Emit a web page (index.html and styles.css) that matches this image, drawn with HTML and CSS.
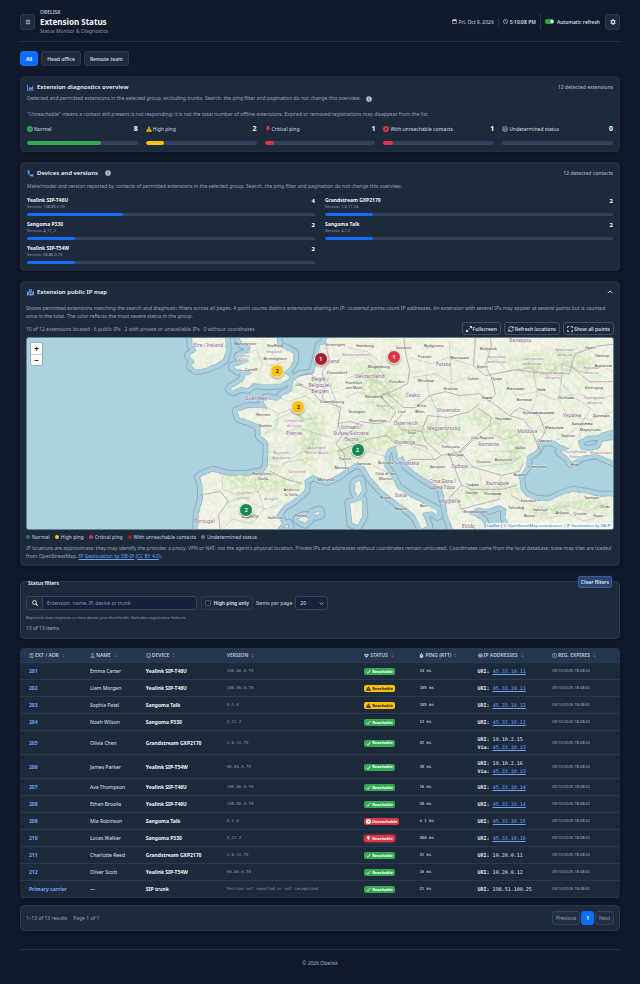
FILE: index.html
```html
<!DOCTYPE html>
<html lang="en">
<head>
<meta charset="utf-8">
<meta name="viewport" content="width=device-width, initial-scale=1">
<title>Extension Status</title>
<link rel="stylesheet" href="styles.css">
</head>
<body>
<svg class="sprite" aria-hidden="true">
  <symbol id="menu" viewBox="0 0 16 16"><path d="M2 3.500h12M2 8h12M2 12.500h12" stroke="currentColor" stroke-width="2"/></symbol>
  <symbol id="calendar" viewBox="0 0 16 16"><path d="M2 3h12v11.500H2z" fill="none" stroke="currentColor" stroke-width="1.800"/><path d="M1.500 2.500h13V6h-13zM4 0h2v3H4zM10 0h2v3h-2z" fill="currentColor"/></symbol>
  <symbol id="clock" viewBox="0 0 16 16"><circle cx="8" cy="8" r="6.800" fill="none" stroke="currentColor" stroke-width="1.800"/><path d="M8 4v4.300l3 1.700" fill="none" stroke="currentColor" stroke-width="1.800"/></symbol>
  <symbol id="gear" viewBox="0 0 16 16"><circle cx="8" cy="8" r="4.200" fill="none" stroke="currentColor" stroke-width="3.400"/><path d="M8 .3v3M8 12.700v3M1.300 4.200l2.600 1.500M12.100 10.300l2.600 1.500M1.300 11.800l2.600-1.500M12.100 5.700l2.600-1.500" stroke="currentColor" stroke-width="3"/></symbol>
  <symbol id="chart" viewBox="0 0 16 16"><path d="M1 1.500V14h14.500" fill="none" stroke="currentColor" stroke-width="2"/><path d="M4 10l3-4 3 3 4-6v9H4z" fill="currentColor"/></symbol>
  <symbol id="info" viewBox="0 0 16 16"><circle cx="8" cy="8" r="7.500" fill="currentColor"/><path d="M8 3.200v2M8 7v5" fill="none" stroke="#1c2a3c" stroke-width="2"/></symbol>
  <symbol id="check-circle" viewBox="0 0 16 16"><circle cx="8" cy="8" r="8" fill="currentColor"/><path d="M4.500 8.200l2.500 2.500 4.500-5" fill="none" stroke="#1c2a3c" stroke-width="1.800"/></symbol>
  <symbol id="warn" viewBox="0 0 16 16"><path d="M8 .8L16 15H0z" fill="currentColor"/><path d="M8 5.500v4.500M8 11.500v2" stroke="#1c2a3c" stroke-width="1.800"/></symbol>
  <symbol id="warn-badge" viewBox="0 0 16 16"><path d="M8 .8L16 15H0z" fill="currentColor"/><path d="M8 5.500v4.500M8 11.500v2" stroke="#ffc107" stroke-width="1.800"/></symbol>
  <symbol id="bolt" viewBox="0 0 16 16"><path d="M5 0h7l-2 5.500h4L5.500 16l2-7H2.500z" fill="currentColor"/></symbol>
  <symbol id="x-circle" viewBox="0 0 16 16"><circle cx="8" cy="8" r="8" fill="currentColor"/><path d="M5.300 5.300l5.400 5.400M10.700 5.300l-5.400 5.400" stroke="#1c2a3c" stroke-width="2"/></symbol>
  <symbol id="x-badge" viewBox="0 0 16 16"><circle cx="8" cy="8" r="8" fill="currentColor"/><path d="M5.300 5.300l5.400 5.400M10.700 5.300l-5.400 5.400" stroke="#dc3545" stroke-width="2"/></symbol>
  <symbol id="q-circle" viewBox="0 0 16 16"><circle cx="8" cy="8" r="8" fill="currentColor"/><path d="M5.500 6.200c0-3.400 5-3.200 5-.4C10.500 7.800 8 7.600 8 9.600M8 11.200v1.800" fill="none" stroke="#1c2a3c" stroke-width="1.600"/></symbol>
  <symbol id="phone" viewBox="0 0 16 16"><path d="M1 1.700L4.700.8l2 4.300-2.200 1.800c1 2.200 2.400 3.600 4.600 4.600l1.800-2.200 4.300 2-.9 3.700C7 15.500.5 9 1 1.700z" fill="currentColor"/></symbol>
  <symbol id="map" viewBox="0 0 16 16"><path d="M0 6.500L4 5v9l-4 1.500zM5.200 8v6l5.600 1.500V8L8 11.500zM12 6l4-1.500v9.300L12 15.500z" fill="currentColor"/><path fill-rule="evenodd" d="M8 0a3.800 3.800 0 013.800 3.800C11.800 6 8 10 8 10S4.200 6 4.200 3.800A3.800 3.800 0 018 0zm0 2.300a1.500 1.500 0 100 3 1.500 1.500 0 000-3z" fill="currentColor"/></symbol>
  <symbol id="up" viewBox="0 0 16 16"><path d="M2 11l6-6 6 6" fill="none" stroke="currentColor" stroke-width="2.600"/></symbol>
  <symbol id="down" viewBox="0 0 16 16"><path d="M2 5l6 6 6-6" fill="none" stroke="currentColor" stroke-width="2.200"/></symbol>
  <symbol id="expand" viewBox="0 0 16 16"><path d="M9 0h7v7zM0 9v7h7z" fill="currentColor"/><path d="M13 3L9.500 6.500M3 13l3.500-3.500" stroke="currentColor" stroke-width="2.400"/></symbol>
  <symbol id="refresh" viewBox="0 0 16 16"><path d="M2 7a6.200 6.200 0 0111-3M14 9a6.200 6.200 0 01-11 3" fill="none" stroke="currentColor" stroke-width="2"/><path d="M15 0v6H9zM1 16v-6h6z" fill="currentColor"/></symbol>
  <symbol id="corners" viewBox="0 0 16 16"><path d="M1.500 5.500v-4h4M10.500 1.500h4v4M14.500 10.500v4h-4M5.500 14.500h-4v-4" fill="none" stroke="currentColor" stroke-width="2.200"/></symbol>
  <symbol id="search" viewBox="0 0 16 16"><circle cx="6.500" cy="6.500" r="5" fill="none" stroke="currentColor" stroke-width="2.400"/><path d="M10 10l5 5" stroke="currentColor" stroke-width="3"/></symbol>
  <symbol id="sort" viewBox="0 0 16 16"><path d="M4 6.500L8 2l4 4.500zM4 9.500L8 14l4-4.500z" fill="currentColor"/></symbol>
  <symbol id="book" viewBox="0 0 16 16"><path d="M3 1h10v14H3z" fill="none" stroke="currentColor" stroke-width="1.800"/><path d="M5.500 11.500c0-3 5-3 5 0zM6.500 4h3v3h-3z" fill="currentColor"/></symbol>
  <symbol id="user" viewBox="0 0 16 16"><circle cx="8" cy="4.500" r="3.200" fill="none" stroke="currentColor" stroke-width="1.800"/><path d="M2 15c0-5.500 12-5.500 12 0z" fill="none" stroke="currentColor" stroke-width="1.800"/></symbol>
  <symbol id="tablet" viewBox="0 0 16 16"><rect x="3" y="1" width="10" height="14" rx="1.500" fill="none" stroke="currentColor" stroke-width="2"/><path d="M6 12.500h4" stroke="currentColor" stroke-width="1.800"/></symbol>
  <symbol id="heart" viewBox="0 0 16 16"><path d="M8 15L1.500 8.500C-1.500 4 4-.5 8 4c4-4.500 9.500 0 6.500 4.500z" fill="currentColor"/><path d="M1 8h5l1.500-2.500L9.500 10l1-2H15" fill="none" stroke="#26364e" stroke-width="1.200"/></symbol>
  <symbol id="timer" viewBox="0 0 16 16"><circle cx="8" cy="9.500" r="6.300" fill="currentColor"/><path d="M5.500 1h5M8 1v3" stroke="currentColor" stroke-width="2"/><path d="M8 6v4" stroke="#26364e" stroke-width="1.500"/></symbol>
  <symbol id="globe" viewBox="0 0 16 16"><circle cx="8" cy="8" r="7.500" fill="currentColor"/><path d="M0 5.700h16M0 10.300h16M8 0v16M8 .5c-5 4-5 11 0 15M8 .5c5 4 5 11 0 15" fill="none" stroke="#26364e" stroke-width=".9"/></symbol>
  <symbol id="check" viewBox="0 0 16 16"><path d="M1.500 8.500l4.500 4.500L14.500 3" fill="none" stroke="currentColor" stroke-width="2.600"/></symbol>
</svg>

<div class="page">
  <header class="top">
    <button class="square" aria-label="Menu"><svg class="ico"><use href="#menu"/></svg></button>
    <div class="brand">
      <p class="over">OBELISK</p>
      <h1>Extension Status</h1>
      <p class="sub">Status Monitor &amp; Diagnostics</p>
    </div>
    <div class="clockbar">
      <span class="stamp"><svg class="ico sm"><use href="#calendar"/></svg>Fri, Oct 9, 2026</span>
      <b class="stamp time"><svg class="ico sm"><use href="#clock"/></svg>5:10:08 PM</b>
      <label class="auto"><input type="checkbox" class="switch" checked>Automatic refresh</label>
      <button class="square" aria-label="Settings"><svg class="ico"><use href="#gear"/></svg></button>
    </div>
  </header>

  <nav class="tabs">
    <button class="tab on">All</button><button class="tab">Head office</button><button class="tab">Remote team</button>
  </nav>

  <main>
  <section class="card overview">
    <div class="head"><h2><svg class="ico"><use href="#chart"/></svg>Extension diagnostics overview</h2><span class="tally">12 detected extensions</span></div>
    <p class="note">Detected and permitted extensions in the selected group, excluding trunks. Search, the ping filter and pagination do not change this overview. <svg class="ico hint"><use href="#info"/></svg></p>
    <p class="note second">"Unreachable" means a contact still present is not responding; it is not the total number of offline extensions. Expired or removed registrations may disappear from the list.</p>
    <div class="stats">
      <div class="stat ok"><p><svg class="ico"><use href="#check-circle"/></svg>Normal<b>8</b></p><div class="bar"><i style="width:66.7%"></i></div></div>
      <div class="stat high"><p><svg class="ico"><use href="#warn"/></svg>High ping<b>2</b></p><div class="bar"><i style="width:16.7%"></i></div></div>
      <div class="stat crit"><p><svg class="ico"><use href="#bolt"/></svg>Critical ping<b>1</b></p><div class="bar"><i style="width:8.3%"></i></div></div>
      <div class="stat crit"><p><svg class="ico"><use href="#x-circle"/></svg>With unreachable contacts<b>1</b></p><div class="bar"><i style="width:8.3%"></i></div></div>
      <div class="stat none"><p><svg class="ico"><use href="#q-circle"/></svg>Undetermined status<b>0</b></p><div class="bar"><i style="width:0"></i></div></div>
    </div>
  </section>

  <section class="card devices">
    <div class="head"><h2><svg class="ico"><use href="#phone"/></svg>Devices and versions <svg class="ico hint"><use href="#info"/></svg></h2><span class="tally">12 detected contacts</span></div>
    <p class="note">Make/model and version reported by contacts of permitted extensions in the selected group. Search, the ping filter and pagination do not change this overview.</p>
    <div class="models">
      <div class="model"><h3>Yealink SIP-T46U</h3><b>4</b><p>Version: 108.86.0.70</p><div class="bar"><i style="width:33.3%"></i></div></div>
      <div class="model"><h3>Grandstream GXP2170</h3><b>2</b><p>Version: 1.0.11.74</p><div class="bar"><i style="width:16.7%"></i></div></div>
      <div class="model"><h3>Sangoma P330</h3><b>2</b><p>Version: 4_11_2</p><div class="bar"><i style="width:16.7%"></i></div></div>
      <div class="model"><h3>Sangoma Talk</h3><b>2</b><p>Version: 4.1.0</p><div class="bar"><i style="width:16.7%"></i></div></div>
      <div class="model"><h3>Yealink SIP-T54W</h3><b>2</b><p>Version: 96.86.0.70</p><div class="bar"><i style="width:16.7%"></i></div></div>
    </div>
  </section>

  <section class="card mapcard">
    <div class="head"><h2><svg class="ico"><use href="#map"/></svg>Extension public IP map</h2><button class="fold" aria-label="Collapse"><svg class="ico"><use href="#up"/></svg></button></div>
    <p class="note wide">Shows permitted extensions matching the search and diagnostic filters across all pages. A point counts distinct extensions sharing an IP; clustered points count IP addresses. An extension with several IPs may appear at several points but is counted once in the total. The color reflects the most severe status in the group.</p>
    <div class="maptools">
      <span>10 of 12 extensions located · 6 public IPs · 2 with private or unavailable IPs · 0 without coordinates</span>
      <button><svg class="ico"><use href="#expand"/></svg>Fullscreen</button>
      <button><svg class="ico"><use href="#refresh"/></svg>Refresh locations</button>
      <button><svg class="ico"><use href="#corners"/></svg>Show all points</button>
    </div>
    <div class="map">
      <svg class="world" viewBox="0 0 588 192" preserveAspectRatio="xMidYMid slice" role="img" aria-label="Map of Europe">
        <defs>
          <filter id="woods" x="0" y="0" width="100%" height="100%">
            <feTurbulence type="fractalNoise" baseFrequency=".07" numOctaves="5" seed="8"/>
            <feColorMatrix values="0 0 0 0 .74  0 0 0 0 .86  0 0 0 0 .65  0 4 0 0 -1.9"/>
          </filter>
          <filter id="fields" x="0" y="0" width="100%" height="100%">
            <feTurbulence type="fractalNoise" baseFrequency=".25" numOctaves="3" seed="21"/>
            <feColorMatrix values="0 0 0 0 .96  0 0 0 0 .94  0 0 0 0 .89  0 5 0 0 -2.2"/>
          </filter>
          <filter id="soft"><feGaussianBlur stdDeviation="4"/></filter>
          <path id="land" fill-rule="evenodd" d="M165-9V0l1 8 4 5-7 5 5 6-3 4 5 4 10-2 10-4 7-4 3-10-1-12V-9zM213-9V0l3 6 8 2-1 6-10 5 8 2 1 3-15 5 4 3 11 1 4 2-7 3-2 5-13 8 3 2 9-4 5 2 6-5 14 1 13-1 10-5-1-3-6-3 6-5 4-6 1-8-7-4-9-3-1-9v-9zM304-9l-5 15-5 2-2 10-2 8-3 10-13 2-7 5-1 10-10 5-2 3-3 2-10-2-4 2 4 8-10-1h-9l-11 4 2 6 9 3 9 4 3 4v7l7 6 1 5-1 20-4 6-16 3h-20l-14-4-6 2-8 4 3 9v14l-4 13-1 16v9h82l-1-9 4-6-5-8 6-9 10-6 12-10v-10l8-5 7 3 7 2 11-5 7-5 10-7 8 2 7 11 12 14 10 8 10 7 11 8 5 7 4 9 6-3-2-6-3-7 9-2 6 4-1-5-17-9-10-5-12-8-6-12-7-10v-10l3-8 8-2 2 12 5-2 4 9 13 10 13 8 9 5 3 12 3 16 5 13v9h34v-9l-4-9-13-7 8-5 12 1 10-4 7 4-1 8 6 12v9h113V-9zM496 153l-2-14 7-10 1-10 9-6 5-9 11-1 9 5 8 3-9 3 9 7 2 4 11-6 14-3 6 3 22 9v31h-25l-13-3-14-2-13 5-10 5-13-1-10-4zM556 112l-3-8 8-5 10-1 13-5h15v7l-22 4-3 7-10 2zM329 146l5-3 2 10-4 6-3-5zM324 166l12-3 1 16-5 9-6-2zM272 182l7-3 4 3-4 4zM287 176l6-2 1 3-4 1zM257 190l5-3 1 4z"/>
          <clipPath id="coast"><use href="#land" clip-rule="evenodd"/></clipPath>
        </defs>
        <rect width="588" height="192" class="sea"/>
        <use href="#land" class="limit"/><use href="#land" class="shelf"/>
        <use href="#land" class="soil"/>
        <g clip-path="url(#coast)">
          <g class="forest" filter="url(#soft)">
            <path d="M330 25l30 10 20 20-15 25-20-10-10-20zM320 100l30-10 60-5 30 10-25 10-60 5-35 15-20-10zM440 70l25 5 35 25-5 30-35-5 25-10-10-15-35-20zM480 22l60-12 30 12-10 12-60 6zM241 112l10-4 5 20-14 8zM375 115l50 30 10 20-20-15zM200 135l60 4 25 10-40 6-45-5zM440 150l50-4 8 10-60 6zM500 170l60-10 40 10-90 10zM270 70l30 10-10 40-15 10z"/>
          </g>
          <rect width="588" height="192" filter="url(#woods)"/>
          <rect width="588" height="192" filter="url(#fields)" opacity=".6"/>
        </g>
        <path class="river" d="M538 20l-2 25 12 14 18 12-8 12-14 14-14 6M405 58l8 20-4 18 14 12 22 22 40-4 12-8M300 40l8 18 6 20-4 20M247 84l20-10 10 6M342 20l14 14 6 12"/>
        <g class="border">
          <path d="M267 40l8 8 10 4 8 10 12 4 10 4-3 16 4 12-6 8 8 10 2 14 5 6M274 38l10-2 8 6 6-2M300 8l4 16-8 10 4 14-4 12 6 6M378 0l2 16 4 16-2 14-20 10 16 14 12 0 14-12 16-4 14 4 20-2 10 8 6-8-4-16-6-12 6-20-2-14M362 56l-8 2 16 16-6 10-14 2-16-2-6 8M380 72l-10 12 6 8 20 2 6-16 20 2 22-6 10-8M396 94l4 10 16 14 20-4 16-16 12-10 2-8-14-10M370 109l8-4 22 4 2 4M416 118l-6 4-24 0-8 4M448 100l-14 14 14 16 28 8 18-4 4-8M424 118l8 20 4 10-12 12M436 148l10 4 30 0 16-4M422 162l10 0 4 10 14-4 24-6M460 60l24 18 14 4 8 10 10 24M484 78l10-8 20 8 6 16-8 14M450 0l-2 28 12 10 30-6 30 4 24 0 6-20 24-8 20-2M546 28l18 16 24 0M174 158l20-4 8 10-10 14 2 14M244 134l16 8 16 4M312 86l12-2 14 4M311 114l16-6 14-6 20-4 8 8M330 88l-10 12 10 8M496 164l-10-6"/>
        </g>
        <g class="region">
          <path d="M220 16l10-4 6 14-4 12M240 28l20-4M238 68l14 8 12-4 14 10 14-2M252 76l-2 14-12 6M258 96l14-6 18 6-4 14-16 8-14 10M290 96l16 4M256 126l20-4 10 8M196 138l0 14 16 6 20-4 8-12M232 154l6 18 14-4M200 166l16-6 22 12-12 14-20-4-8 8M250 58l12 6 18-6 10 8M322 10l20 4 14 12-6 16 14 12M322 40l14-4 14 8M320 60l12-6 16 6 16-6M384 20l22 6 16-6 26 8M386 40l24-4 16 10 20-8M404 60l-4-24M426 46l-2-42M470 20l12 14 22-4 18 8 14-12 20 8 20-6 12 6M480 42l10 16 22-4 16 8 24-6 18 6 18-4M508 32l4 24-6 20M536 38l-2 24 8 16 24 4 22-8M464 96l16 6 18-8M462 114l26 0 10-6M362 120l-18-6-14 4M346 128l14 6 12 12M380 106l24 10 10 12M508 168l20 4 14-4 20 6 20-8M520 182l22-6 16 8 24-6M454 136l2 12M474 136l2 14M530 80l-18 10 10 8M558 84l-4 16M420 78l2 20-10 10"/>
        </g>
        <g class="lands">
          <text x="182" y="9">Éire / Ireland</text><text x="248" y="15" class="s">England</text><text x="217" y="19" class="s">Cymru</text><text x="217" y="24" class="s">Wales</text><text x="230" y="62">Guernsey</text><text x="268" y="84" class="s">Centre-Val</text><text x="268" y="89" class="s">de Loire</text><text x="268" y="98">France</text><text x="255" y="117" class="s">Nouvelle</text><text x="255" y="122" class="s">Aquitaine</text><text x="271" y="136" class="s">Occitanie</text><text x="291" y="112" class="s">Auvergne</text><text x="291" y="117" class="s">Rhône-Alpes</text><text x="217" y="157" class="s">Castilla</text><text x="217" y="162" class="s">y León</text><text x="245" y="163" class="s">Aragón</text><text x="224" y="181">España</text><text x="178" y="186">Portugal</text><text x="294" y="43">België /</text><text x="294" y="49">Belgique /</text><text x="294" y="55">Belgien</text><text x="301" y="25">Nederland</text><text x="330" y="18" class="s">Niedersachsen</text><text x="344" y="40">Deutschland</text><text x="418" y="28">Polska</text><text x="387" y="59">Česko</text><text x="423" y="74">Slovensko</text><text x="380" y="87">Österreich</text><text x="418" y="93">Magyarország</text><text x="357" y="69" class="s">Bayern</text><text x="325" y="92">Schweiz/</text><text x="325" y="98">Suisse/Svizzera</text><text x="325" y="104">/Svizra</text><text x="379" y="107">Slovenija</text><text x="463" y="109">România</text><text x="502" y="96">Moldova</text><text x="383" y="128">Hrvatska</text><text x="434" y="131">Србија</text><text x="417" y="146">Crna Gora /</text><text x="417" y="152">Црна Гора</text><text x="424" y="166">Shqipëria</text><text x="472" y="148">България</text><text x="375" y="160">Italia</text><text x="495" y="4">Беларусь</text><text x="547" y="79">Україна</text><text x="443" y="191">Ελλάς</text><text x="471" y="20" class="s">Брэсцкая</text><text x="471" y="25" class="s">вобласць</text><text x="507" y="22" class="s">Гомельская</text><text x="507" y="27" class="s">вобласць</text><text x="539" y="13" class="s">Брянская</text><text x="539" y="18" class="s">область</text><text x="566" y="31" class="s">Курская</text><text x="566" y="36" class="s">область</text><text x="527" y="36" class="s">Чернігівська</text><text x="527" y="41" class="s">область</text><text x="569" y="61" class="s">Харківська</text><text x="569" y="66" class="s">область</text><text x="550" y="116" class="s">Республика</text><text x="550" y="121" class="s">Крым</text><text x="576" y="117" class="s">Краснодар</text>
        </g>
        <g class="towns">
          <text x="219" y="7">Manchester</text><text x="249" y="9">Sheffield</text><text x="249" y="22">Birmingham</text><text x="225" y="33">Cardiff</text><text x="273" y="48">Lille</text><text x="237" y="78">Rennes</text><text x="239" y="89">Nantes</text><text x="237" y="138">Pamplona /</text><text x="237" y="143">Iruña</text><text x="265" y="154">Andorra</text><text x="265" y="159">la Vella</text><text x="249" y="182">València</text><text x="275" y="180">Palma</text><text x="300" y="144">Marseille</text><text x="309" y="8">Groningen</text><text x="339" y="9">Hamburg</text><text x="378" y="11">Szczecin</text><text x="408" y="9">Bydgoszcz</text><text x="463" y="12">Białystok</text><text x="399" y="20">Poznań</text><text x="434" y="21">Warszawa</text><text x="353" y="30">Magdeburg</text><text x="311" y="36">Düsseldorf</text><text x="328" y="46">Frankfurt</text><text x="328" y="51">am Main</text><text x="371" y="45">Dresden</text><text x="400" y="44">Wrocław</text><text x="425" y="52">Kraków</text><text x="448" y="42">Lublin</text><text x="457" y="30">Брест</text><text x="471" y="42">Луцьк</text><text x="490" y="52">Житомир</text><text x="516" y="53">Київ</text><text x="499" y="63">Вінниця</text><text x="541" y="61">Полтава</text><text x="565" y="11">Орёл</text><text x="569" y="51">Белгород</text><text x="577" y="19">Липецк</text><text x="578" y="29">Воронеж</text><text x="461" y="61">Львів</text><text x="348" y="60">Nürnberg</text><text x="306" y="65">Luxembourg</text><text x="331" y="75">Stuttgart</text><text x="376" y="75">Linz</text><text x="396" y="69">Brno</text><text x="394" y="75">Wien</text><text x="352" y="84">München</text><text x="386" y="97">Graz</text><text x="478" y="82">Чернівці</text><text x="513" y="76">Кропивницький</text><text x="557" y="87">Запоріжжя</text><text x="565" y="94">Маріуполь</text><text x="576" y="79">Донецьк</text><text x="529" y="92">Миколаїв</text><text x="543" y="100">Херсон</text><text x="518" y="105">Одеса</text><text x="495" y="112">Galați</text><text x="457" y="102">Cluj-Napoca</text><text x="425" y="111">Timișoara</text><text x="430" y="119">Београд</text><text x="458" y="126">Craiova</text><text x="478" y="124">București</text><text x="512" y="131">Constanța</text><text x="494" y="139">Варна</text><text x="412" y="131">Sarajevo</text><text x="447" y="149">София</text><text x="446" y="157">Скопје</text><text x="467" y="158">Пловдив</text><text x="450" y="176">Θεσσαλονίκη</text><text x="503" y="165">İstanbul</text><text x="491" y="172">Tekirdağ</text><text x="515" y="174">Sakarya</text><text x="504" y="180">Bursa</text><text x="537" y="177">Ankara</text><text x="555" y="178">Çorum</text><text x="573" y="180">Sivas</text><text x="580" y="171">Ordu</text><text x="567" y="162">Samsun</text><text x="550" y="129">Ялта</text><text x="319" y="123">Torino</text><text x="338" y="128">Genova</text><text x="316" y="132">Monaco</text><text x="360" y="127">Bologna</text><text x="360" y="138">Città di San</text><text x="360" y="143">Marino</text><text x="360" y="162">Roma</text><text x="375" y="173">Napoli</text><text x="398" y="170">Bari</text>
        </g>
      </svg>
      <div class="zoomer"><button aria-label="Zoom in">+</button><button aria-label="Zoom out">−</button></div>
      <button class="pin high p1">2</button><button class="pin high p2">2</button><button class="pin ok p3">2</button><button class="pin ok p4">2</button><button class="pin dark p5">1</button><button class="pin crit p6">1</button>
      <p class="credit"><a href="#">Leaflet</a> | © <a href="#">OpenStreetMap contributors</a> | <a href="#">IP Geolocation by DB-IP</a></p>
    </div>
    <ul class="legend"><li class="ok">Normal</li><li class="high">High ping</li><li class="crit">Critical ping</li><li class="dark">With unreachable contacts</li><li class="none">Undetermined status</li></ul>
    <p class="note wide foot">IP locations are approximate: they may identify the provider, a proxy, VPN or NAT, not the agent's physical location. Private IPs and addresses without coordinates remain unlocated. Coordinates come from the local database; base map tiles are loaded from OpenStreetMap. <a href="#">IP Geolocation by DB-IP</a> (<a href="#">CC BY 4.0</a>).</p>
  </section>

  <form class="card filters">
    <div class="titles"><h2>Status filters</h2><button type="button">Clear filters</button></div>
    <div class="controls">
      <div class="search"><label for="q" aria-label="Search"><svg class="ico"><use href="#search"/></svg></label><input id="q" type="search" placeholder="Extension, name, IP, device or trunk"></div>
      <label class="only"><input type="checkbox">High ping only</label>
      <label class="per" for="per">Items per page</label>
      <span class="pick"><select id="per"><option>20</option><option>50</option></select><svg class="ico"><use href="#down"/></svg></span>
    </div>
    <p class="help">Reported slow response or time above your thresholds. Excludes registration failures.</p>
    <p class="found">13 of 13 items</p>
  </form>

  <div class="tablebox">
  <table>
    <colgroup><col class="c1"><col class="c2"><col class="c3"><col class="c4"><col class="c5"><col class="c6"><col class="c7"><col class="c8"></colgroup>
    <thead><tr>
      <th><svg class="ico"><use href="#book"/></svg>EXT / AOR<svg class="ico sort"><use href="#sort"/></svg></th>
      <th><svg class="ico"><use href="#user"/></svg>NAME<svg class="ico sort"><use href="#sort"/></svg></th>
      <th><svg class="ico"><use href="#tablet"/></svg>DEVICE<svg class="ico sort"><use href="#sort"/></svg></th>
      <th>VERSION<svg class="ico sort"><use href="#sort"/></svg></th>
      <th><svg class="ico"><use href="#heart"/></svg>STATUS<svg class="ico sort"><use href="#sort"/></svg></th>
      <th><svg class="ico"><use href="#timer"/></svg>PING (RTT)<svg class="ico sort"><use href="#sort"/></svg></th>
      <th><svg class="ico"><use href="#globe"/></svg>IP ADDRESSES<svg class="ico sort"><use href="#sort"/></svg></th>
      <th><svg class="ico"><use href="#clock"/></svg>REG. EXPIRES<svg class="ico sort"><use href="#sort"/></svg></th>
    </tr></thead>
    <tbody>
      <tr><td>201</td><td>Emma Carter</td><td>Yealink SIP-T46U</td><td>108.86.0.70</td><td><span class="badge ok"><svg class="ico"><use href="#check"/></svg>Reachable</span></td><td>14 ms</td><td><b>URI:</b> <a href="#">45.33.10.11</a></td><td>09/10/2026 18:08:32</td></tr>
      <tr><td>202</td><td>Liam Morgan</td><td>Yealink SIP-T46U</td><td>108.86.0.70</td><td><span class="badge high"><svg class="ico"><use href="#warn-badge"/></svg>Reachable</span></td><td>185 ms</td><td><b>URI:</b> <a href="#">45.33.10.11</a></td><td>09/10/2026 18:08:32</td></tr>
      <tr><td>203</td><td>Sophia Patel</td><td>Sangoma Talk</td><td>4.1.0</td><td><span class="badge high"><svg class="ico"><use href="#warn-badge"/></svg>Reachable</span></td><td>185 ms</td><td><b>URI:</b> <a href="#">45.33.10.12</a></td><td>09/10/2026 18:08:32</td></tr>
      <tr><td>204</td><td>Noah Wilson</td><td>Sangoma P330</td><td>4_11_2</td><td><span class="badge ok"><svg class="ico"><use href="#check"/></svg>Reachable</span></td><td>12 ms</td><td><b>URI:</b> <a href="#">45.33.10.12</a></td><td>09/10/2026 18:08:32</td></tr>
      <tr class="tall"><td>205</td><td>Olivia Chen</td><td>Grandstream GXP2170</td><td>1.0.11.74</td><td><span class="badge ok"><svg class="ico"><use href="#check"/></svg>Reachable</span></td><td>42 ms</td><td><b>URI:</b> 10.10.2.15<br><b>Via:</b> <a href="#">45.33.10.13</a></td><td>09/10/2026 18:08:32</td></tr>
      <tr class="tall"><td>206</td><td>James Parker</td><td>Yealink SIP-T54W</td><td>96.86.0.70</td><td><span class="badge ok"><svg class="ico"><use href="#check"/></svg>Reachable</span></td><td>38 ms</td><td><b>URI:</b> 10.10.2.16<br><b>Via:</b> <a href="#">45.33.10.13</a></td><td>09/10/2026 18:08:32</td></tr>
      <tr><td>207</td><td>Ava Thompson</td><td>Yealink SIP-T46U</td><td>108.86.0.70</td><td><span class="badge ok"><svg class="ico"><use href="#check"/></svg>Reachable</span></td><td>16 ms</td><td><b>URI:</b> <a href="#">45.33.10.14</a></td><td>09/10/2026 18:08:32</td></tr>
      <tr><td>208</td><td>Ethan Brooks</td><td>Yealink SIP-T46U</td><td>108.86.0.70</td><td><span class="badge ok"><svg class="ico"><use href="#check"/></svg>Reachable</span></td><td>20 ms</td><td><b>URI:</b> <a href="#">45.33.10.14</a></td><td>09/10/2026 18:08:32</td></tr>
      <tr><td>209</td><td>Mia Robinson</td><td>Sangoma Talk</td><td>4.1.0</td><td><span class="badge crit"><svg class="ico"><use href="#x-badge"/></svg>Unreachable</span></td><td>&lt; 1 ms</td><td><b>URI:</b> <a href="#">45.33.10.15</a></td><td>09/10/2026 18:08:32</td></tr>
      <tr><td>210</td><td>Lucas Walker</td><td>Sangoma P330</td><td>4_11_2</td><td><span class="badge crit glow"><svg class="ico"><use href="#bolt"/></svg>Reachable</span></td><td>480 ms</td><td><b>URI:</b> <a href="#">45.33.10.16</a></td><td>09/10/2026 18:08:32</td></tr>
      <tr><td>211</td><td>Charlotte Reed</td><td>Grandstream GXP2170</td><td>1.0.11.74</td><td><span class="badge ok"><svg class="ico"><use href="#check"/></svg>Reachable</span></td><td>31 ms</td><td><b>URI:</b> 10.20.0.11</td><td>09/10/2026 18:08:32</td></tr>
      <tr><td>212</td><td>Oliver Scott</td><td>Yealink SIP-T54W</td><td>96.86.0.70</td><td><span class="badge ok"><svg class="ico"><use href="#check"/></svg>Reachable</span></td><td>16 ms</td><td><b>URI:</b> 10.20.0.12</td><td>09/10/2026 18:08:32</td></tr>
      <tr><td>Primary carrier</td><td>—</td><td>SIP trunk</td><td>Version not reported or not recognised</td><td><span class="badge ok"><svg class="ico"><use href="#check"/></svg>Reachable</span></td><td>21 ms</td><td><b>URI:</b> 198.51.100.25</td><td>09/10/2026 18:08:32</td></tr>
    </tbody>
  </table>
  </div>

  <div class="card pager">
    <span>1–13 of 13 results</span><span>Page 1 of 1</span>
    <nav><button>Previous</button><button class="on">1</button><button>Next</button></nav>
  </div>
  </main>
  <footer>© 2026 Obelisk</footer>
</div>
</body>
</html>
```
FILE: styles.css
```css
* { box-sizing: border-box; }
html { background: #111a2a; }
body { margin: 0; background: #111a2a; color: #dfe6ef; font-family: "Noto Sans", sans-serif; font-size: 5px; line-height: 8px; }
h1, h2, h3, p, ul { margin: 0; padding: 0; }
button, input, select { font: inherit; color: inherit; margin: 0; padding: 0; }
button { display: inline-flex; align-items: center; justify-content: center; gap: 2px; cursor: pointer; white-space: nowrap; }
a { color: #6ea1f5; }
.sprite { position: absolute; width: 0; height: 0; }
.ico { width: 6px; height: 6px; flex: none; }
.page { padding: 8px 20px 16px; }

.top { display: flex; align-items: center; height: 34px; border-bottom: 1px solid #243247; gap: 5px; padding-bottom: 6px; }
.square { width: 15px; height: 16px; border: 1px solid #2b3a4f; border-radius: 3px; background: #1d2b3d; color: #cfd9e6; }
.brand { flex: 1; }
.over { line-height: 7px; font-weight: 600; color: #b6c1d0; }
h1 { font-size: 8px; line-height: 12px; color: #f4f7fb; }
.sub { line-height: 7px; color: #8796ab; }
.clockbar { display: flex; align-items: center; }
.stamp { display: flex; align-items: center; gap: 2px; padding-right: 4px; border-right: 1px solid #28364a; line-height: 8px; color: #d5dde8; }
.time { padding: 4px 4px 4px 4px; font-weight: 600; }
.ico.sm { width: 5px; height: 5px; }
.auto { display: flex; align-items: center; gap: 3px; padding: 0 5px 0 4px; font-weight: 500; }
.switch { appearance: none; width: 9px; height: 5px; border-radius: 3px; background: radial-gradient(circle at 7px 50%, #fff 1px, transparent 2px) #28a745; }

.tabs { display: flex; gap: 3px; padding: 9px 0 10px; }
.tab { height: 15px; padding: 0 5px; border: 1px solid #2b3a4f; border-radius: 3px; background: #1d2b3d; font-weight: 600; color: #cbd5e2; }
.tab.on { background: #0d6efd; border-color: #0d6efd; color: #fff; }

.card { border: 1px solid #213043; border-radius: 4px; background: #1c2a3c; margin-bottom: 10px; box-shadow: 0 1px 5px rgba(3, 8, 18, .3); }
.overview { padding: 5px 6px 6px; }
.devices { padding: 5px 6px 6px; }
.head { display: flex; align-items: center; justify-content: space-between; height: 10px; }
h2 { display: flex; align-items: center; gap: 3px; font-size: 6px; line-height: 8px; font-weight: 600; color: #f0f4f9; }
h2 .ico:first-child { color: #6c9af2; width: 7px; height: 7px; }
.tally { font-weight: 500; color: #a5b2c4; }
.note { color: #94a3b8; }
.hint { color: #b4c0d0; vertical-align: middle; margin-left: 4px; }
.overview .note { margin-top: 2px; }
.overview .second { margin-top: 8px; }
.stats { display: grid; grid-template-columns: repeat(5, 1fr); gap: 8px; margin-top: 6px; }
.stat p { display: flex; align-items: center; gap: 1px; height: 10px; color: #d5dde8; }
.stat b { margin-left: auto; font-size: 7px; color: #fff; }
.stat .bar { height: 4px; margin: 7px 0 0; }
.bar { height: 3px; border-radius: 2px; background: #33425a; overflow: hidden; }
.bar i { display: block; height: 100%; border-radius: 2px; background: #0d6efd; }
.ok .ico { color: #34a853; } .high .ico { color: #ffc107; } .crit .ico { color: #dc3545; } .none .ico { color: #6c757d; }
.ok .bar i { background: #34a853; } .high .bar i { background: #ffc107; } .crit .bar i { background: #dc3545; }

.devices .note { margin-top: 4px; }
.models { display: grid; grid-template-columns: 1fr 1fr; gap: 5px 10px; margin-top: 7px; }
.model { display: grid; grid-template-columns: 1fr auto; }
.model h3 { font-size: 5px; line-height: 7px; color: #f0f4f9; }
.model > b { font-size: 6px; line-height: 8px; grid-row: span 2; color: #fff; }
.model p { font-size: 4px; line-height: 6px; color: #94a3b8; }
.model .bar { grid-column: 1 / 3; margin-top: 3px; }

.mapcard { padding: 5px 5px 5px; }
.mapcard .head { padding: 0 1px; }
.fold { border: 0; background: none; }
.wide { margin-top: 7px; }
.maptools { display: flex; align-items: center; gap: 3px; margin: 2px 0; color: #94a3b8; }
.maptools span { flex: 1; }
.maptools button { height: 13px; padding: 0 3px; border: 1px solid #435168; border-radius: 3px; background: none; font-weight: 500; color: #dfe6ef; gap: 1px; }
.map { position: relative; height: 193px; border: 1px solid #66808f; border-radius: 3px; overflow: hidden; background: #aad3df; }
.world { display: block; width: 100%; height: 100%; }
.sea { fill: #aad3df; }
.limit { fill: none; stroke: #93a9c6; stroke-width: 11px; stroke-linejoin: round; }
.shelf { fill: none; stroke: #aad3df; stroke-width: 9px; stroke-linejoin: round; }
.soil { fill: #eef0df; stroke: #90b4c8; stroke-width: 1px; }
.forest { fill: #c3dfa9; opacity: .7; }
.border, .region { fill: none; stroke: #a98db0; stroke-width: 1px; opacity: .65; }
.region { opacity: .3; }
.river { fill: none; stroke: #9ccbdc; stroke-width: 1px; opacity: .7; }
.world text { font-size: 4px; text-anchor: middle; paint-order: stroke; stroke: #f5f5ec; stroke-width: 1px; stroke-opacity: .6; }
.world .lands text { font-size: 5px; fill: #8d6897; }
.world .lands .s { font-size: 4px; fill: #a17fab; }
.towns text { fill: #3e4144; }
.zoomer { position: absolute; left: 3px; top: 4px; display: grid; border: 1px solid #8fb0bb; border-radius: 2px; overflow: hidden; }
.zoomer button { width: 11px; height: 11px; border: 0; background: #fff; color: #111; font-size: 8px; font-weight: 700; }
.zoomer button + button { border-top: 1px solid #ccc; }
.pin { position: absolute; width: 14px; height: 14px; margin: -7px 0 0 -7px; border: 1px solid #f8f4e4; border-radius: 50%; font-size: 5px; font-weight: 700; color: #fff; box-shadow: 0 1px 2px rgba(0, 0, 0, .35); }
.pin.high { background: #ffc107; color: #222; } .pin.ok { background: #198754; } .pin.crit { background: #dc3545; } .pin.dark { background: #a61e2d; }
.p1 { left: 42.7%; top: 17.3%; } .p2 { left: 46.3%; top: 36%; } .p3 { left: 37.4%; top: 90%; } .p4 { left: 56.4%; top: 58.8%; } .p5 { left: 50.1%; top: 11%; } .p6 { left: 62.6%; top: 10%; }
.credit { position: absolute; right: 1px; bottom: 0; padding: 0 1px; font-size: 4px; line-height: 6px; background: rgba(255, 255, 255, .8); color: #333; }
.credit a { color: #0078a8; text-decoration: none; }
.legend { display: flex; gap: 5px; margin-top: 3px; list-style: none; color: #cbd5e2; }
.legend li { display: flex; align-items: center; gap: 2px; }
.legend li::before { content: ""; width: 4px; height: 4px; border-radius: 50%; background: #6c757d; }
.legend .ok::before { background: #198754; } .legend .high::before { background: #ffc107; } .legend .crit::before { background: #dc3545; } .legend .dark::before { background: #a61e2d; }
.foot { margin-top: 3px; }

.filters { margin: 15px 0 9px; padding: 0 5px 6px; border-color: #2a394e; }
.titles { display: flex; justify-content: space-between; align-items: flex-end; margin: 0 2px; height: 6px; }
.titles h2 { font-size: 5px; line-height: 10px; }
.titles button { height: 12px; padding: 0 2px; border: 1px solid #3a5f96; border-radius: 2px; background: #294673; font-weight: 600; }
.controls { display: flex; align-items: center; gap: 3px; margin-top: 8px; }
.search { display: flex; width: 29%; height: 14px; border: 1px solid #35445b; border-radius: 3px; background: #16213a; overflow: hidden; margin-right: 1px; }
.search label { display: flex; align-items: center; justify-content: center; width: 16px; background: #1c2a3c; border-right: 1px solid #35445b; }
.search input { flex: 1; min-width: 0; border: 0; background: none; padding: 0 4px; outline: 0; appearance: none; }
.search input::placeholder { color: #8b9ab0; opacity: 1; }
.only { display: flex; align-items: center; gap: 3px; height: 14px; padding: 0 3px; border: 1px solid #2c3b50; border-radius: 3px; font-weight: 600; }
.only input { appearance: none; width: 6px; height: 6px; border: 1px solid #46556c; border-radius: 1px; background: #16213a; }
.per { font-weight: 500; color: #b9c5d4; }
.pick { position: relative; width: 33px; display: block; }
.pick select { appearance: none; width: 100%; height: 14px; padding: 0 4px; border: 1px solid #35445b; border-radius: 3px; background: #16213a; display: block; }
.pick .ico { position: absolute; right: 4px; top: 5px; width: 5px; height: 5px; }
.help { font-size: 4px; line-height: 7px; margin-top: 4px; color: #94a3b8; }
.found { margin-top: 3px; color: #a5b2c4; }

.tablebox { border-radius: 4px; overflow: hidden; background: #1c2a3c; box-shadow: 0 1px 5px rgba(3, 8, 18, .3); }
table { width: 100%; table-layout: fixed; border-collapse: separate; border-spacing: 0; }
.c1 { width: 11%; } .c2 { width: 9.3%; } .c3 { width: 13.5%; } .c4 { width: 22.9%; } .c5 { width: 9.2%; } .c6 { width: 9.7%; } .c7 { width: 12.4%; } .c8 { width: 12%; }
th, td { padding: 0 0 0 4px; text-align: left; white-space: nowrap; vertical-align: middle; border-bottom: 1px solid #2b3b51; }
th:first-child, td:first-child { padding-left: 9px; }
th { height: 15px; background: #26364e; font-weight: 600; color: #c0cbda; }
th .ico { width: 5px; height: 5px; vertical-align: middle; margin-right: 1px; }
th .sort { color: #56667f; margin: 0 0 0 2px; }
td { height: 17px; line-height: 8px; }
.tall td { height: 24px; }
td:nth-child(1) { font-weight: 700; color: #75a7fa; }
td:nth-child(3) { font-weight: 700; color: #f0f4f9; }
td:nth-child(4) { font-family: "DejaVu Sans Mono", monospace; font-size: 4px; color: #8c9bb0; }
td:nth-child(6) { font-family: "DejaVu Sans Mono", monospace; font-size: 4px; }
td:nth-child(7) { font-family: "DejaVu Sans Mono", monospace; }
td:nth-child(8) { font-size: 4px; color: #a0aec0; }
.badge { display: inline-flex; align-items: center; gap: 1px; height: 7px; padding: 0 2px; border-radius: 2px; font-size: 4px; font-weight: 700; color: #fff; vertical-align: middle; }
.badge .ico { width: 5px; height: 5px; color: inherit; }
.badge.ok { background: #34a853; } .badge.high { background: #ffc107; color: #222; } .badge.crit { background: #dc3545; }
.badge.glow { box-shadow: 0 0 3px #dc3545; }

.pager { display: flex; align-items: center; gap: 6px; height: 26px; margin: 7px 0 18px; padding: 0 5px; color: #94a3b8; border-color: #2a394e; }
.pager nav { display: flex; gap: 1px; margin-left: auto; }
.pager button { height: 14px; padding: 0 3px; border: 1px solid #34435a; border-radius: 3px; background: #202f43; color: #94a3b8; }
.pager .on { padding: 0 4px; background: #0d6efd; border-color: #0d6efd; color: #fff; font-weight: 700; }
footer { border-top: 1px solid #243247; padding-top: 9px; text-align: center; color: #a5b2c4; }
```
